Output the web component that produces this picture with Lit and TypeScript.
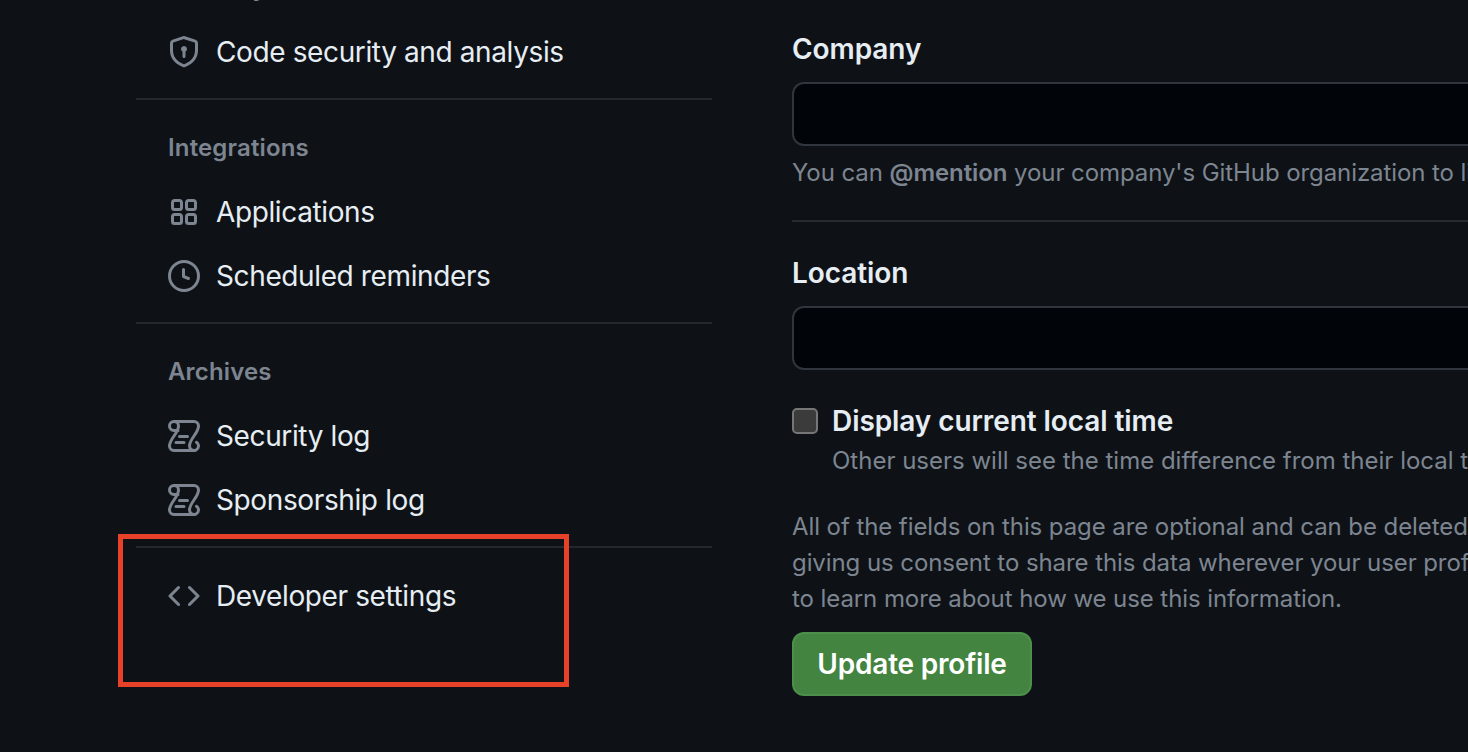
import { css, html, LitElement, svg } from 'lit';
import { customElement } from 'lit/decorators.js';

const icons = {
  shield: svg`<path d="M7.467.133a1.748 1.748 0 0 1 1.066 0l5.25 1.68A1.75 1.75 0 0 1 15 3.48V7c0 1.566-.32 3.182-1.303 4.682-.983 1.498-2.585 2.813-5.032 3.855a1.697 1.697 0 0 1-1.33 0c-2.447-1.042-4.049-2.357-5.032-3.855C1.32 10.182 1 8.566 1 7V3.48a1.75 1.75 0 0 1 1.217-1.667Zm.61 1.429a.25.25 0 0 0-.153 0l-5.25 1.68a.25.25 0 0 0-.174.238V7c0 1.358.275 2.666 1.057 3.86.784 1.194 2.121 2.34 4.366 3.297a.196.196 0 0 0 .154 0c2.245-.956 3.582-2.104 4.366-3.298C13.225 9.666 13.5 8.36 13.5 7V3.48a.251.251 0 0 0-.174-.237l-5.25-1.68ZM9.5 6.5a1.5 1.5 0 0 1-.75 1.3v2.45a.75.75 0 0 1-1.5 0V7.8A1.5 1.5 0 1 1 9.5 6.5Z"/>`,
  apps: svg`<path d="M1.5 3.25c0-.966.784-1.75 1.75-1.75h2.5c.966 0 1.75.784 1.75 1.75v2.5A1.75 1.75 0 0 1 5.75 7.5h-2.5A1.75 1.75 0 0 1 1.5 5.75Zm7 0c0-.966.784-1.75 1.75-1.75h2.5c.966 0 1.75.784 1.75 1.75v2.5a1.75 1.75 0 0 1-1.75 1.75h-2.5A1.75 1.75 0 0 1 8.5 5.75Zm-7 7c0-.966.784-1.75 1.75-1.75h2.5c.966 0 1.75.784 1.75 1.75v2.5a1.75 1.75 0 0 1-1.75 1.75h-2.5a1.75 1.75 0 0 1-1.75-1.75Zm7 0c0-.966.784-1.75 1.75-1.75h2.5c.966 0 1.75.784 1.75 1.75v2.5a1.75 1.75 0 0 1-1.75 1.75h-2.5a1.75 1.75 0 0 1-1.75-1.75ZM3.25 3a.25.25 0 0 0-.25.25v2.5c0 .138.112.25.25.25h2.5A.25.25 0 0 0 6 5.75v-2.5A.25.25 0 0 0 5.75 3Zm7 0a.25.25 0 0 0-.25.25v2.5c0 .138.112.25.25.25h2.5a.25.25 0 0 0 .25-.25v-2.5a.25.25 0 0 0-.25-.25Zm-7 7a.25.25 0 0 0-.25.25v2.5c0 .138.112.25.25.25h2.5a.25.25 0 0 0 .25-.25v-2.5a.25.25 0 0 0-.25-.25Zm7 0a.25.25 0 0 0-.25.25v2.5c0 .138.112.25.25.25h2.5a.25.25 0 0 0 .25-.25v-2.5a.25.25 0 0 0-.25-.25Z"/>`,
  clock: svg`<path d="M8 0a8 8 0 1 1 0 16A8 8 0 0 1 8 0ZM1.5 8a6.5 6.5 0 1 0 13 0 6.5 6.5 0 0 0-13 0Zm7-3.25v2.992l2.028.812a.75.75 0 0 1-.557 1.392l-2.5-1A.751.751 0 0 1 7 8.25v-3.5a.75.75 0 0 1 1.5 0Z"/>`,
  log: svg`<g fill="none" stroke="currentColor" stroke-width="1.5" stroke-linecap="round"><path d="M5 5.25H3A2.25 2.25 0 0 1 3 .75h10A2.25 2.25 0 0 1 15.25 3c0 3.6-4.5 6.4-4.5 10a2.25 2.25 0 1 0 3.5-1.85"/><path d="M13 15.25H3A2.25 2.25 0 0 1 .75 13c0-3.6 4.5-6.4 4.5-10A2.25 2.25 0 0 0 3 .75"/><path d="M5.75 8.25h4M4 11.25h4"/></g>`,
  code: svg`<path d="m11.28 3.22 4.25 4.25a.75.75 0 0 1 0 1.06l-4.25 4.25a.749.749 0 0 1-1.275-.326.749.749 0 0 1 .215-.734L13.94 8l-3.72-3.72a.749.749 0 0 1 .326-1.275.749.749 0 0 1 .734.215Zm-6.56 0a.751.751 0 0 1 1.042.018.751.751 0 0 1 .018 1.042L2.06 8l3.72 3.72a.749.749 0 0 1-.326 1.275.749.749 0 0 1-.734-.215L.47 8.53a.75.75 0 0 1 0-1.06Z"/>`,
};

type IconName = keyof typeof icons;

const sections: { title?: string; items: { icon: IconName; label: string }[] }[] = [
  { title: 'Security', items: [{ icon: 'shield', label: 'Code security and analysis' }] },
  {
    title: 'Integrations',
    items: [
      { icon: 'apps', label: 'Applications' },
      { icon: 'clock', label: 'Scheduled reminders' },
    ],
  },
  {
    title: 'Archives',
    items: [
      { icon: 'log', label: 'Security log' },
      { icon: 'log', label: 'Sponsorship log' },
    ],
  },
  { items: [{ icon: 'code', label: 'Developer settings' }] },
];

@customElement('app-root')
export class AppRoot extends LitElement {
  static styles = css`
    :host {
      display: block;
      position: relative;
      width: 1468px;
      height: 752px;
      overflow: hidden;
      background: #0e1217;
      color: #e6edf3;
      font-family: Inter, 'Noto Sans', sans-serif;
      font-size: 28px;
    }

    .page {
      display: flex;
      gap: 80px;
      padding-left: 136px;
    }

    .sidebar {
      flex: none;
      width: 576px;
      margin-top: -60px;
    }

    .section + .section {
      margin-top: 14px;
      border-top: 2px solid #23282f;
    }

    .heading {
      margin-top: 16px;
      padding-left: 32px;
      line-height: 64px;
      font-size: 24px;
      font-weight: 600;
      letter-spacing: 0.15px;
      color: #7d8590;
    }

    .section.plain {
      padding-top: 16px;
    }

    .item {
      display: flex;
      align-items: center;
      gap: 16px;
      height: 64px;
      padding-left: 32px;
      letter-spacing: -0.38px;
      white-space: nowrap;
    }

    .item svg {
      flex: none;
      width: 32px;
      height: 32px;
      fill: #7d8590;
      color: #7d8590;
    }

    .main {
      flex: none;
      width: 1500px;
      padding-top: 29px;
      white-space: nowrap;
    }

    .label {
      line-height: 40px;
      font-weight: 600;
      letter-spacing: -0.08px;
    }

    .field {
      height: 64px;
      margin-top: 13px;
      box-sizing: border-box;
      background: #010409;
      border: 2px solid #30363d;
      border-radius: 12px;
    }

    .note {
      line-height: 36px;
      font-size: 24px;
      letter-spacing: -0.08px;
      color: #7d8590;
    }

    .note strong {
      font-weight: 600;
    }

    .field + .note {
      margin-top: 9px;
    }

    .rule {
      height: 2px;
      margin: 29px 0 31px;
      background: #262b32;
    }

    .check {
      display: grid;
      grid-template-columns: 26px 1fr;
      column-gap: 14px;
      margin-top: 31px;
    }

    .box {
      align-self: center;
      height: 26px;
      box-sizing: border-box;
      background: #3b3b3b;
      border: 2px solid #767676;
      border-radius: 5px;
    }

    .check .note {
      grid-column: 2;
      margin-top: 2px;
      letter-spacing: 0;
    }

    .legal {
      margin-top: 30px;
    }

    .save {
      display: block;
      margin-top: 15px;
      width: 240px;
      height: 64px;
      padding: 0;
      box-sizing: border-box;
      background: #438440;
      border: 2px solid #4f8f4c;
      border-radius: 12px;
      color: #fff;
      font: 600 28px Inter, 'Noto Sans', sans-serif;
      letter-spacing: -0.2px;
    }

    .callout {
      position: absolute;
      left: 118px;
      top: 534px;
      width: 451px;
      height: 153px;
      box-sizing: border-box;
      border: 5px solid #e8412a;
      pointer-events: none;
    }
  `;

  render() {
    return html`
      <div class="page">
        <nav class="sidebar">
          ${sections.map(
            ({ title, items }) => html`
              <div class="section ${title ? '' : 'plain'}">
                ${title ? html`<div class="heading">${title}</div>` : ''}
                ${items.map(
                  ({ icon, label }) => html`
                    <div class="item">
                      <svg viewBox="0 0 16 16">${icons[icon]}</svg>
                      <span>${label}</span>
                    </div>
                  `
                )}
              </div>
            `
          )}
        </nav>
        <div class="main">
          <div class="label">Company</div>
          <div class="field"></div>
          <div class="note">
            You can <strong>@mention</strong> your company's GitHub organization to link it.
          </div>
          <div class="rule"></div>
          <div class="label">Location</div>
          <div class="field"></div>
          <div class="check">
            <div class="box"></div>
            <div class="label">Display current local time</div>
            <div class="note">Other users will see the time difference from their local time.</div>
          </div>
          <div class="note legal">
            All of the fields on this page are optional and can be deleted at any time, and by filling them out, you're<br />
            giving us consent to share this data wherever your user profile appears. Please see our privacy statement<br />
            to learn more about how we use this information.
          </div>
          <button class="save">Update profile</button>
        </div>
      </div>
      <div class="callout"></div>
    `;
  }
}
